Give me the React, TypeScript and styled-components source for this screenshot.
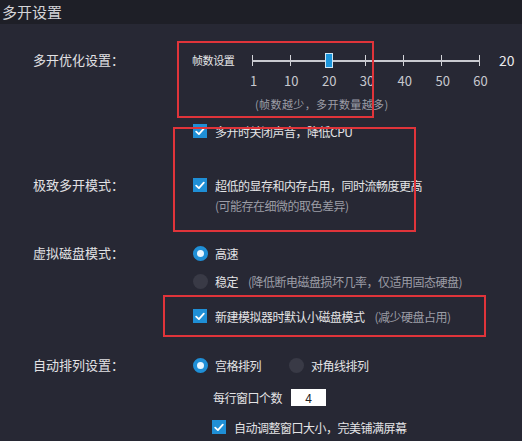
import React from 'react';
import styled, { createGlobalStyle } from 'styled-components';

const GlobalStyle = createGlobalStyle`
  html, body {
    margin: 0;
    padding: 0;
    background: #272834;
  }
  body {
    font-family: "Noto Sans CJK SC", "Noto Sans", sans-serif;
  }
`;

const FONT = `"Noto Sans CJK SC", "Noto Sans", sans-serif`;

const Page = styled.div`
  position: relative;
  width: 522px;
  height: 441px;
  overflow: hidden;
  background: #272834;
  font-family: ${FONT};
  color: #e4e4e6;
`;

const Header = styled.div`
  height: 24px;
  line-height: 24px;
  padding-left: 2px;
  background: #1e1f27;
  font-size: 15px;
  color: #d4d4d8;
`;

const Row = styled.div<{ $top: number }>`
  display: grid;
  grid-template-columns: 160px 1fr;
  padding-left: 33px;
  margin-top: ${({ $top }) => $top}px;
`;

const Label = styled.div`
  font-size: 13px;
  line-height: 20px;
  height: 20px;
  color: #e2e2e4;
  white-space: nowrap;
`;

const Content = styled.div`
  display: flex;
  flex-direction: column;
`;

const Line = styled.div<{ $gap?: number; $indent?: number }>`
  display: flex;
  align-items: center;
  height: 20px;
  margin-top: ${({ $gap }) => $gap ?? 0}px;
  padding-left: ${({ $indent }) => $indent ?? 0}px;
  font-size: 12px;
  white-space: nowrap;
  letter-spacing: -0.5px;
`;

const Text = styled.span<{ $muted?: boolean; $ml?: number }>`
  color: ${({ $muted }) => ($muted ? '#9c9da6' : '#e4e4e6')};
  margin-left: ${({ $ml }) => $ml ?? 0}px;
`;

/* slider */
const SliderLabel = styled.span`
  width: 60px;
  font-size: 11px;
  color: #e6e6e8;
  margin-left: -1px;
  letter-spacing: -0.4px;
`;

const Track = styled.div`
  position: relative;
  width: 228px;
  height: 11px;
  display: flex;
  justify-content: space-between;
  align-items: center;
`;

const TrackBar = styled.div`
  position: absolute;
  left: 0;
  right: 0;
  top: 5px;
  height: 2px;
  background: #c9cad0;
`;

const Tick = styled.div`
  width: 1px;
  height: 11px;
  background: #d4d5da;
`;

const Thumb = styled.div`
  position: absolute;
  top: -2px;
  width: 6px;
  height: 13px;
  background: #1c96dc;
  border: 1px solid #cfe8f7;
  transform: translateX(-3px);
`;

const SliderValue = styled.span`
  margin-left: 19px;
  font-size: 14px;
  color: #eaeaec;
  letter-spacing: 0;
`;

const TickLabels = styled.div`
  width: 228px;
  margin-left: 60px;
  display: flex;
  justify-content: space-between;
  height: 20px;
  align-items: center;
`;

const TickLabel = styled.span`
  width: 1px;
  display: flex;
  justify-content: center;
  font-size: 13px;
  color: #c8c9cf;
  letter-spacing: 0;
`;

const Hint = styled.div`
  height: 20px;
  line-height: 20px;
  margin-top: 4px;
  padding-left: 62px;
  font-size: 11px;
  color: #9c9da6;
  white-space: nowrap;
  letter-spacing: 0.4px;
`;

/* controls */
const Box = styled.span`
  width: 14px;
  height: 14px;
  flex: none;
  margin-right: 8px;
  background: #1f8fd6;
  display: flex;
  align-items: center;
  justify-content: center;
`;

const Check = () => (
  <Box>
    <svg width="10" height="9" viewBox="0 0 10 9">
      <path d="M1.2 4.6 L3.9 7.1 L8.8 1.6" fill="none" stroke="#fff" strokeWidth="1.8" strokeLinecap="round" strokeLinejoin="round" />
    </svg>
  </Box>
);

const RadioDot = styled.span<{ $on?: boolean; $ml?: number }>`
  width: 15px;
  height: 15px;
  flex: none;
  margin-left: ${({ $ml }) => $ml ?? 0}px;
  margin-right: 7px;
  border-radius: 50%;
  box-sizing: border-box;
  background: ${({ $on }) => ($on ? '#e8f6ff' : '#393a46')};
  border: ${({ $on }) => ($on ? '4px solid #1f8fd6' : 'none')};
`;

const NumInput = styled.span`
  width: 35px;
  height: 17px;
  margin-left: 9px;
  background: #fff;
  color: #222;
  font-size: 12px;
  display: flex;
  align-items: center;
  justify-content: center;
  letter-spacing: 0;
`;

const Annotation = styled.div`
  position: absolute;
  border: 2px solid #e0343a;
  box-sizing: border-box;
  pointer-events: none;
`;

const marks = [1, 10, 20, 30, 40, 50, 60];
const frames = 20;

const highlights = [
  { left: 177, top: 41, width: 197, height: 77 },
  { left: 173, top: 127, width: 243, height: 105 },
  { left: 163, top: 295, width: 323, height: 42 },
];

export default function App() {
  const idx = marks.indexOf(frames);
  return (
    <Page>
      <GlobalStyle />
      <Header>多开设置</Header>

      <Row $top={26}>
        <Label>多开优化设置：</Label>
        <Content>
          <Line>
            <SliderLabel>帧数设置</SliderLabel>
            <Track>
              <TrackBar />
              {marks.map((m) => (
                <Tick key={m} />
              ))}
              <Thumb style={{ left: `${(idx / (marks.length - 1)) * 228}px` }} />
            </Track>
            <SliderValue>{frames}</SliderValue>
          </Line>
          <TickLabels>
            {marks.map((m) => (
              <TickLabel key={m}>{m}</TickLabel>
            ))}
          </TickLabels>
          <Hint>(帧数越少，多开数量越多)</Hint>
          <Line $gap={7}>
            <Check />
            <Text>多开时关闭声音，降低CPU</Text>
          </Line>
        </Content>
      </Row>

      <Row $top={34}>
        <Label>极致多开模式：</Label>
        <Content>
          <Line>
            <Check />
            <Text>超低的显存和内存占用，同时流畅度更高</Text>
          </Line>
          <Line $indent={22}>
            <Text $muted>(可能存在细微的取色差异)</Text>
          </Line>
        </Content>
      </Row>

      <Row $top={28}>
        <Label>虚拟磁盘模式：</Label>
        <Content>
          <Line>
            <RadioDot $on />
            <Text>高速</Text>
          </Line>
          <Line $gap={8}>
            <RadioDot />
            <Text>稳定</Text>
            <Text $muted $ml={10}>(降低断电磁盘损坏几率，仅适用固态硬盘)</Text>
          </Line>
          <Line $gap={15}>
            <Check />
            <Text>新建模拟器时默认小磁盘模式</Text>
            <Text $muted $ml={10}>(减少硬盘占用)</Text>
          </Line>
        </Content>
      </Row>

      <Row $top={29}>
        <Label>自动排列设置：</Label>
        <Content>
          <Line>
            <RadioDot $on />
            <Text>宫格排列</Text>
            <RadioDot $ml={28} />
            <Text>对角线排列</Text>
          </Line>
          <Line $gap={12} $indent={20}>
            <Text>每行窗口个数</Text>
            <NumInput>4</NumInput>
          </Line>
          <Line $gap={10} $indent={19}>
            <Check />
            <Text>自动调整窗口大小，完美铺满屏幕</Text>
          </Line>
        </Content>
      </Row>

      {highlights.map((h, i) => (
        <Annotation key={i} style={h} />
      ))}
    </Page>
  );
}
